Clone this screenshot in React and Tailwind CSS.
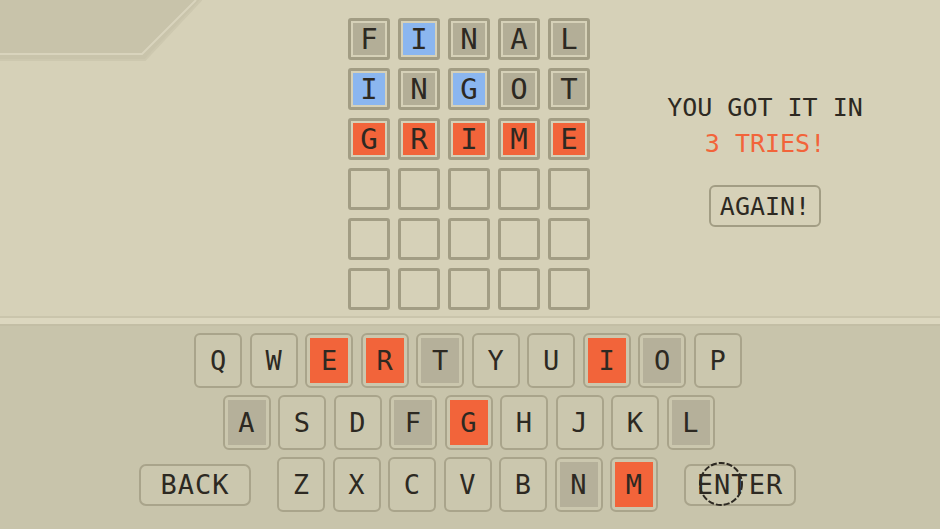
import React from "react";

const pixelFont = { fontFamily: '"DejaVu Sans Mono", "Liberation Mono", monospace' };

const guesses = [
  [["F", "gray"], ["I", "blue"], ["N", "gray"], ["A", "gray"], ["L", "gray"]],
  [["I", "blue"], ["N", "gray"], ["G", "blue"], ["O", "gray"], ["T", "gray"]],
  [["G", "hit"], ["R", "hit"], ["I", "hit"], ["M", "hit"], ["E", "hit"]],
];

const tileFill = {
  gray: "bg-[#b3ae97]",
  blue: "bg-[#8bb6ef]",
  hit: "bg-[#f2643a]",
};

const keyRows = [
  ["Q", "W", "E", "R", "T", "Y", "U", "I", "O", "P"],
  ["A", "S", "D", "F", "G", "H", "J", "K", "L"],
  ["Z", "X", "C", "V", "B", "N", "M"],
];

const keyState = {
  E: "hit", R: "hit", I: "hit", G: "hit", M: "hit",
  T: "gray", O: "gray", A: "gray", F: "gray", L: "gray", N: "gray",
};

const Tile = ({ letter, state }) => (
  <div className="w-[42px] h-[42px] border-[3px] border-[#a29d84] rounded-[3px] p-[2px]">
    {state ? (
      <div className={`w-full h-full flex items-center justify-center ${tileFill[state]}`}>
        <span className="text-[29px] leading-none text-[#2d2922]">{letter}</span>
      </div>
    ) : null}
  </div>
);

const Key = ({ letter }) => {
  const state = keyState[letter];
  const fill = state === "hit" ? "bg-[#f2643a]" : state === "gray" ? "bg-[#b5b09a]" : "bg-[#cbc7ae]";
  return (
    <div className="w-[48px] h-[55px] border-2 border-[#a9a48b] rounded-[6px] bg-[#cbc7ae] p-[3px]">
      <div className={`w-full h-full flex items-center justify-center ${fill}`}>
        <span className="text-[27px] leading-none text-[#2d2922]">{letter}</span>
      </div>
    </div>
  );
};

const WideKey = ({ label, children }) => (
  <div className="relative w-[112px] h-[42px] border-2 border-[#a9a48b] rounded-[7px] bg-[#cbc7ae] flex items-center justify-center">
    <span className="text-[27px] leading-none text-[#2d2922] tracking-[1px]">{label}</span>
    {children}
  </div>
);

export default function App() {
  return (
    <div className="relative w-[940px] h-[529px] overflow-hidden bg-[#d6d1b8] select-none" style={pixelFont}>
      {/* corner plate, top left */}
      <svg className="absolute left-0 top-0" width="210" height="64" viewBox="0 0 210 64">
        <polygon points="0,0 202,0 144,61 0,61" fill="#c9c4ab" />
        <polygon points="0,0 196,0 142,54 0,54" fill="#c8c3aa" />
        <polyline points="0,54 142,54 196,0" fill="none" stroke="#d9d4bd" strokeWidth="2" />
        <polyline points="0,60 145,60 201,0" fill="none" stroke="#cdc8af" strokeWidth="2" />
      </svg>

      <div className="relative h-[316px] flex pt-[18px] pl-[348px]">
        <div className="flex flex-col gap-[8px]">
          {Array.from({ length: 6 }).map((_, r) => (
            <div key={r} className="flex gap-[8px]">
              {Array.from({ length: 5 }).map((_, c) => {
                const cell = guesses[r] ? guesses[r][c] : null;
                return <Tile key={c} letter={cell ? cell[0] : ""} state={cell ? cell[1] : null} />;
              })}
            </div>
          ))}
        </div>

        <div className="ml-[75px] w-[200px] flex flex-col items-center pt-[77px]">
          <div className="text-[25px] leading-none text-[#2d2922] whitespace-nowrap">YOU GOT IT IN</div>
          <div className="mt-[11px] text-[25px] leading-none text-[#f2643a] whitespace-nowrap">3 TRIES!</div>
          <div className="mt-[29px] w-[112px] h-[42px] border-2 border-[#a29d84] rounded-[6px] flex items-center justify-center">
            <span className="text-[25px] leading-none text-[#2d2922]">AGAIN!</span>
          </div>
        </div>
      </div>

      {/* divider between board and keyboard */}
      <div className="h-[2px] bg-[#cac5ac]" />
      <div className="h-[6px] bg-[#dcd7bf]" />
      <div className="h-[2px] bg-[#c3bea5]" />

      <div className="bg-[#c8c4ab] h-[203px] flex flex-col items-center pt-[7px] gap-[7px]">
        <div className="flex gap-[7.5px] ml-[-4px]">
          {keyRows[0].map((k) => (
            <Key key={k} letter={k} />
          ))}
        </div>
        <div className="flex gap-[7.5px] ml-[-3px]">
          {keyRows[1].map((k) => (
            <Key key={k} letter={k} />
          ))}
        </div>
        <div className="flex items-center ml-[-5px]">
          <WideKey label="BACK" />
          <div className="flex gap-[7.5px] mx-[26px]">
            {keyRows[2].map((k) => (
              <Key key={k} letter={k} />
            ))}
          </div>
          <WideKey label="ENTER">
            {/* pointer ring */}
            <svg className="absolute left-[11px] top-[-8px]" width="48" height="52" viewBox="0 0 48 52">
              <circle cx="24" cy="26" r="21" fill="none" stroke="#2d2922" strokeWidth="2" strokeDasharray="6 2" />
            </svg>
          </WideKey>
        </div>
      </div>
    </div>
  );
}
